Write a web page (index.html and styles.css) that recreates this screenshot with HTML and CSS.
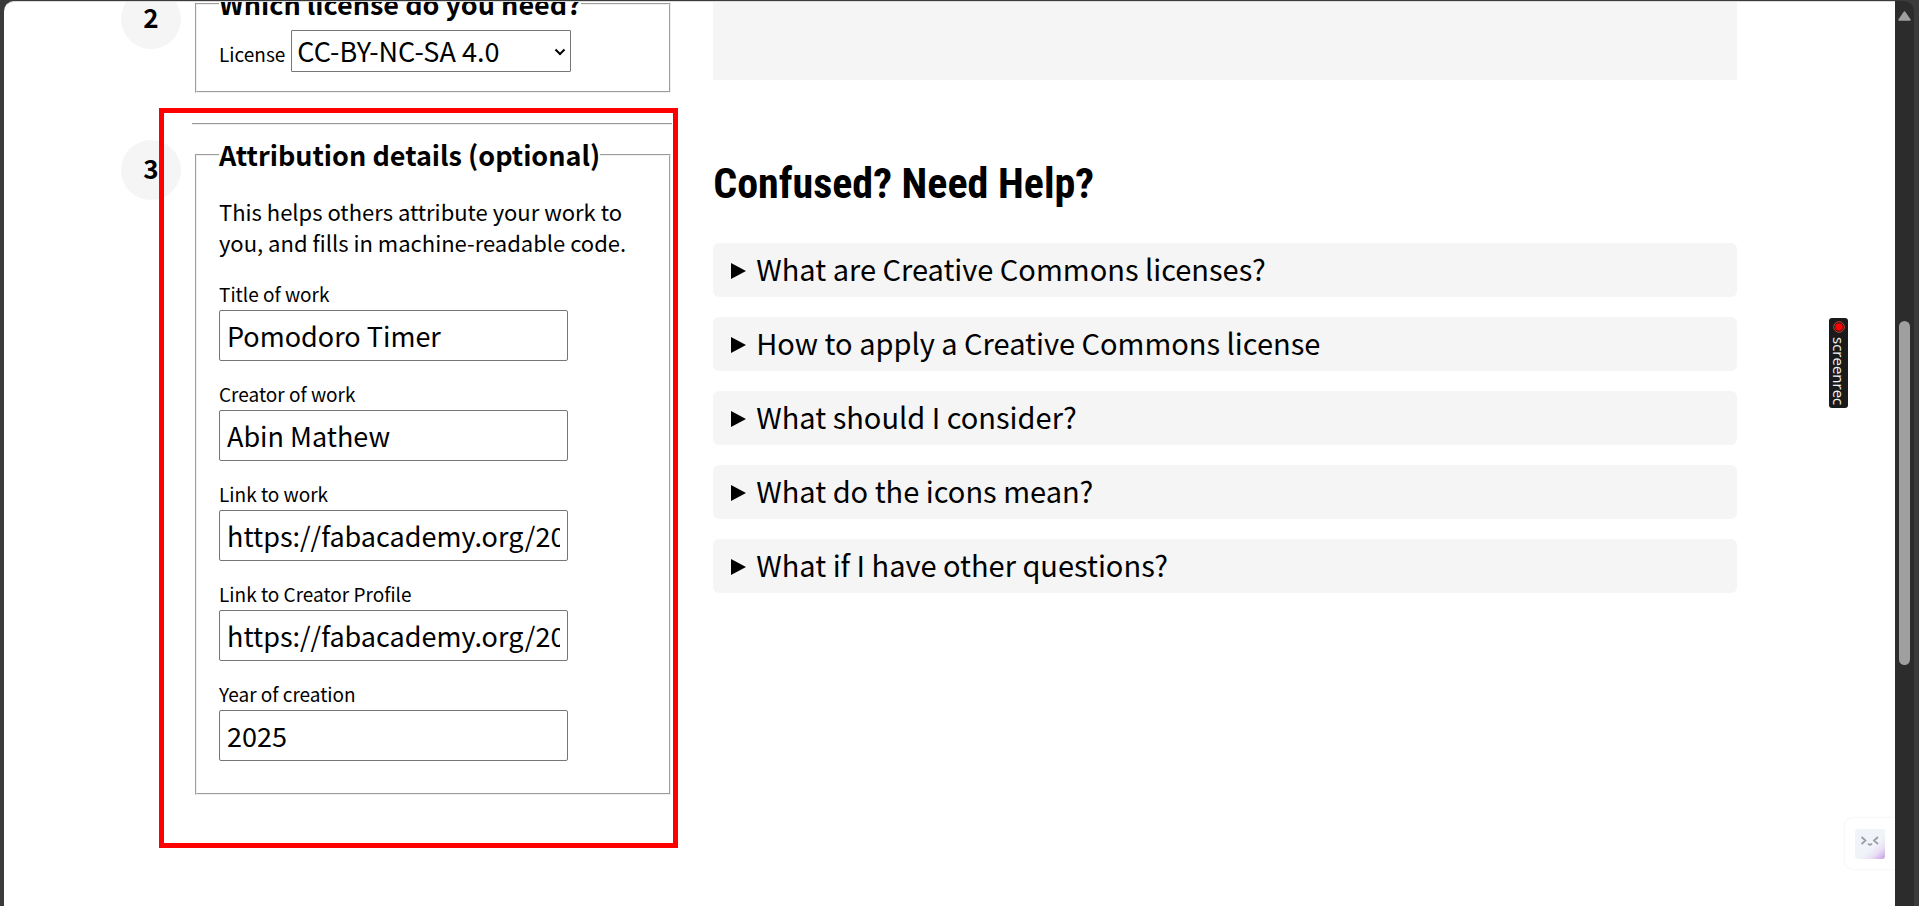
FILE: index.html
```html
<!DOCTYPE html>
<html lang="en">
<head>
<meta charset="utf-8">
<title>License Chooser</title>
<link rel="stylesheet" href="styles.css">
</head>
<body>
<div class="window">
  <main class="page">
    <form class="steps">
      <section class="step step-license">
        <span class="step-number">2</span>
        <fieldset class="panel">
          <legend class="panel-title">Which license do you need?</legend>
          <div class="license-row">
            <label class="label" for="license">License</label>
            <span class="select-wrap">
              <select class="select" id="license"><option>CC-BY-NC-SA 4.0</option></select>
              <svg class="chevron" viewBox="0 0 12 8" aria-hidden="true"><path d="M1.5 1.5 6 6l4.500-4.500" fill="none" stroke="#000" stroke-width="2"/></svg>
            </span>
          </div>
        </fieldset>
      </section>
      <section class="step step-details">
        <hr class="divider">
        <span class="step-number">3</span>
        <fieldset class="panel">
          <legend class="panel-title">Attribution details (optional)</legend>
          <p class="intro">This helps others attribute your work to you, and fills in machine-readable code.</p>
          <div class="field"><label class="label" for="title">Title of work</label><input class="input" id="title" type="text" value="Pomodoro Timer"></div>
          <div class="field"><label class="label" for="creator">Creator of work</label><input class="input" id="creator" type="text" value="Abin Mathew"></div>
          <div class="field"><label class="label" for="work-link">Link to work</label><input class="input" id="work-link" type="text" value="https://fabacademy.org/2025/"></div>
          <div class="field"><label class="label" for="profile-link">Link to Creator Profile</label><input class="input" id="profile-link" type="text" value="https://fabacademy.org/2025/"></div>
          <div class="field"><label class="label" for="year">Year of creation</label><input class="input" id="year" type="text" value="2025"></div>
        </fieldset>
        <div class="highlight"></div>
      </section>
    </form>
    <div class="side">
      <div class="result"></div>
      <h2 class="help-title">Confused? Need Help?</h2>
      <div class="help-list">
        <details class="help-item"><summary class="help-summary">What are Creative Commons licenses?</summary></details>
        <details class="help-item"><summary class="help-summary">How to apply a Creative Commons license</summary></details>
        <details class="help-item"><summary class="help-summary">What should I consider?</summary></details>
        <details class="help-item"><summary class="help-summary">What do the icons mean?</summary></details>
        <details class="help-item"><summary class="help-summary">What if I have other questions?</summary></details>
      </div>
    </div>
    <div class="recorder">
      <svg class="recorder-dot" viewBox="0 0 12 12" aria-hidden="true"><circle cx="6" cy="6" r="5.300" fill="none" stroke="#c9403c" stroke-width="1"/><circle cx="6" cy="6" r="3.800" fill="#f00"/></svg>
      <span>screenrec</span>
    </div>
    <button class="assistant" type="button" aria-label="Assistant">
      <svg class="assistant-face" viewBox="0 0 30 30" aria-hidden="true">
        <defs><linearGradient id="face" x1="0.300" y1="0.200" x2="1" y2="1"><stop offset="0.450" stop-color="#f0f4f8"/><stop offset="0.700" stop-color="#eadff5"/><stop offset="1" stop-color="#c49be8"/></linearGradient></defs>
        <rect width="30" height="30" rx="3" fill="url(#face)"/>
        <path d="M6.500 8l4 3.500-4 3.500M23 8l-4 3.500 4 3.500M13 14.500q2 2.500 4 0" fill="none" stroke="#9a9ea6" stroke-width="1.800"/>
      </svg>
    </button>
  </main>
  <div class="scrollbar">
    <svg class="arrow" viewBox="0 0 13 10" aria-hidden="true"><path d="M6.500 1 12 9H1z" fill="#9f9f9f" stroke="#9f9f9f" stroke-width="1.500" stroke-linejoin="round"/></svg>
    <div class="thumb"></div>
  </div>
</div>
</body>
</html>
```
FILE: styles.css
```css
* { box-sizing: border-box; }

body {
  margin: 0;
  background: #3b3b3b;
  color: #000;
  font-family: "Noto Sans CJK SC", "Noto Sans", sans-serif;
}

.window {
  display: flex;
  height: 100vh;
  padding: 1px 5px 0 4px;
  overflow: hidden;
}

.page {
  position: relative;
  flex: 1;
  min-width: 0;
  display: grid;
  grid-template-columns: minmax(0, 35fr) minmax(0, 65fr);
  column-gap: 41px;
  align-items: start;
  padding: 0 158px 0 117px;
  background: #fff;
  border-top: 1px solid #dcdcdc;
  border-top-left-radius: 10px;
  overflow: hidden;
}

.steps { margin-top: -18px; }

.step {
  position: relative;
  display: grid;
  grid-template-columns: 60px minmax(0, 1fr);
  column-gap: 14px;
  align-items: start;
}

.step-number {
  width: 60px;
  height: 60px;
  margin-top: 5px;
  border-radius: 50%;
  background: #f5f5f5;
  font-size: 26px;
  font-weight: 700;
  line-height: 55px;
  text-align: center;
}

.panel {
  min-width: 0;
  margin: 0 1px 0 0;
  padding: 0 22px;
  border: 2px groove #f0f0f0;
}

.panel-title {
  padding: 0;
  font-size: 27px;
  font-weight: 700;
  line-height: 40px;
  white-space: nowrap;
}

.step-license .panel { padding-bottom: 19px; }

.license-row {
  display: flex;
  align-items: center;
  gap: 6px;
  margin-top: 6px;
}

.label {
  display: block;
  font-size: 19px;
  line-height: 24px;
}

.license-row .label { padding-top: 6px; }

.select-wrap { position: relative; }

.select {
  display: block;
  width: 280px;
  height: 42px;
  padding: 0 5px;
  appearance: none;
  border: 1px solid #767676;
  border-radius: 1px;
  background: #fff;
  color: #000;
  font-family: inherit;
  font-size: 27px;
  line-height: 40px;
}

.chevron {
  position: absolute;
  right: 5px;
  top: 18px;
  width: 12px;
  height: 8px;
}

.step-details { margin-top: 30px; }

.divider {
  grid-column: 2;
  width: auto;
  height: 2px;
  margin: 0 0 10px -3px;
  border: 0;
  border-top: 1px solid #9a9a9a;
  border-bottom: 1px solid #eee;
}

.step-details .panel { padding-bottom: 32px; }

.intro {
  margin: 21px 0 24px;
  font-size: 22px;
  line-height: 31px;
}

.field { margin-bottom: 21px; }
.field:last-child { margin-bottom: 0; }
.field .label { margin-bottom: 4px; }

.input {
  display: block;
  width: 349px;
  max-width: 100%;
  height: 51px;
  padding: 0 7px;
  border: 1px solid #767676;
  border-radius: 2px;
  background: #fff;
  color: #000;
  font-family: inherit;
  font-size: 27px;
}

.highlight {
  position: absolute;
  inset: -15px -6px -53px 38px;
  border: 5px solid #f00;
  pointer-events: none;
}

.result {
  height: 78px;
  background: #f5f5f5;
}

.help-title {
  margin: 76px 0 32px;
  font-family: "Roboto Condensed", Roboto, sans-serif;
  font-size: 42px;
  font-weight: 700;
  line-height: 55px;
}

.help-list {
  display: grid;
  gap: 20px;
}

.help-item {
  border-radius: 6px;
  background: #f5f5f5;
}

.help-summary {
  display: flex;
  align-items: center;
  gap: 10px;
  padding: 0 18px 4px;
  font-size: 29px;
  line-height: 50px;
  list-style: none;
}

.help-summary::before {
  content: "";
  margin-top: 6px;
  border: solid transparent;
  border-width: 8px 0 8px 15px;
  border-left-color: #000;
}

.recorder {
  position: absolute;
  right: 47px;
  top: 316px;
  display: flex;
  flex-direction: column;
  align-items: center;
  gap: 4px;
  width: 19px;
  height: 90px;
  padding-top: 3px;
  border-radius: 3px;
  background: #1a1a1a;
  color: #f2f2f2;
  font-family: "Open Sans", sans-serif;
  font-size: 15px;
  font-weight: 500;
  line-height: 19px;
}

.recorder span { writing-mode: vertical-rl; }

.recorder-dot {
  flex: none;
  width: 12px;
  height: 12px;
}

.assistant {
  position: absolute;
  right: 0;
  bottom: 37px;
  width: 50px;
  height: 51px;
  padding: 10px;
  border: 0;
  border-radius: 8px 0 0 8px;
  background: #fff;
  box-shadow: 0 0 3px rgba(0, 0, 0, 0.08);
}

.assistant-face {
  display: block;
  width: 30px;
  height: 30px;
}

.scrollbar {
  position: relative;
  width: 19px;
  background: #2c2c2c;
  border-top-right-radius: 10px;
}

.arrow {
  position: absolute;
  left: 3px;
  top: 10px;
  width: 13px;
  height: 10px;
}

.thumb {
  position: absolute;
  left: 4px;
  top: 320px;
  width: 11px;
  height: 344px;
  border-radius: 6px;
  background: #9f9f9f;
}
```
